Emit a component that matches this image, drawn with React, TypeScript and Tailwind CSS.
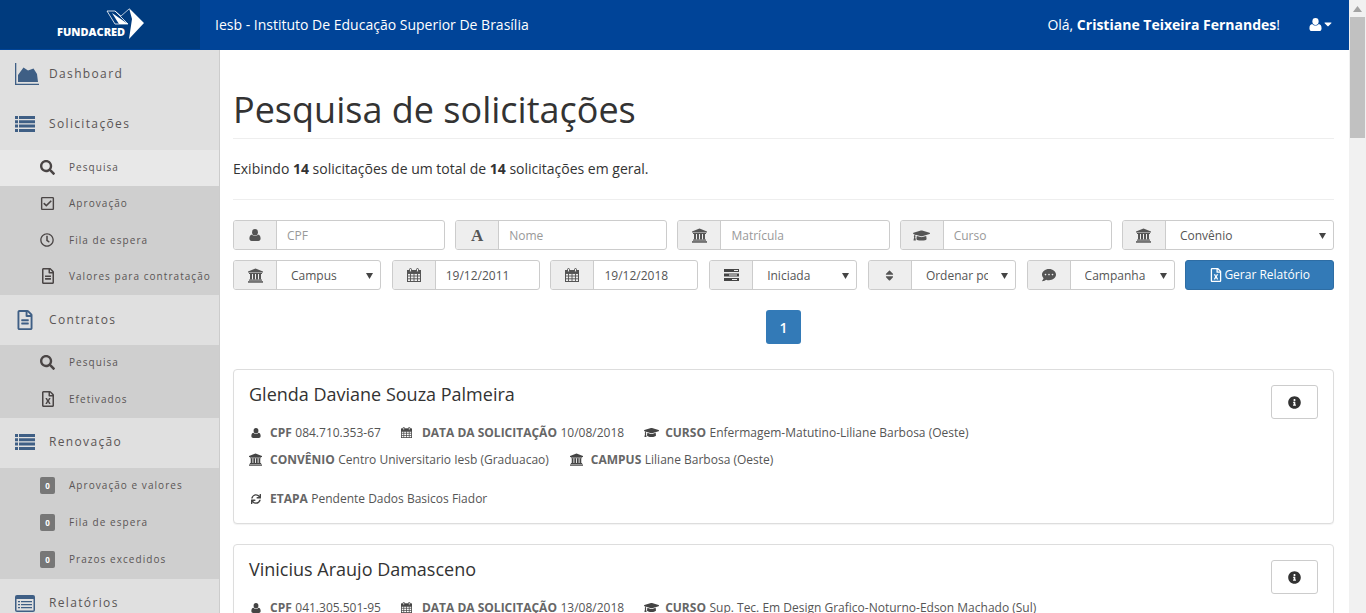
import React from "react";
import {
  FaGraduationCap, FaSort, FaCommentDots, FaRegFileExcel, FaInfoCircle, FaSync, FaSearch,
  FaRegCheckSquare, FaRegClock, FaRegFileAlt, FaCaretDown,
} from "react-icons/fa";

const font = "font-['Open_Sans',sans-serif]";

function UserIcon({ size = 12 }: { size?: number }) {
  return (
    <svg width={size} height={size} viewBox="0 0 12 12" fill="currentColor">
      <ellipse cx="6" cy="3.2" rx="2.9" ry="3.2" />
      <path d="M3 5.6C3.8 6.6 4.9 7 6 7s2.2-.4 3-1.4c1.7.3 2.6 1.6 2.6 4 0 1.5-.9 2.4-2.2 2.4H2.6C1.3 12 .4 11.100.4 9.600c0-2.400.9-3.700 2.600-4z" />
    </svg>
  );
}

function BankIcon({ size = 15 }: { size?: number }) {
  return (
    <svg width={size} height={size} viewBox="0 0 15 15" fill="currentColor">
      <path d="M7.500 0.500L15 3.500V4.500H0V3.500z" />
      <rect x="1" y="5" width="13" height="1" />
      <rect x="2" y="6" width="2" height="5.500" />
      <rect x="5" y="6" width="2" height="5.500" />
      <rect x="8" y="6" width="2" height="5.500" />
      <rect x="11" y="6" width="2" height="5.500" />
      <rect x="1" y="11.500" width="13" height="1.200" />
      <rect x="0" y="13.200" width="15" height="1.500" />
    </svg>
  );
}

function CalendarIcon({ size = 14 }: { size?: number }) {
  return (
    <svg width={size} height={size} viewBox="0 0 14 14" fill="none" stroke="currentColor" strokeWidth="1">
      <rect x="0.500" y="2.500" width="13" height="11" />
      <path d="M0.500 5.500h13M0.500 8h13M0.500 10.800h13M3.500 5.500v8M7 5.500v8M10.500 5.500v8" strokeWidth="0.900" />
      <path d="M0.500 2.500h13v2.500h-13z" fill="currentColor" />
      <rect x="2.500" y="0.500" width="2" height="3.500" rx="1" fill="#eee" />
      <rect x="9.500" y="0.500" width="2" height="3.500" rx="1" fill="#eee" />
    </svg>
  );
}

function ChartIcon() {
  return (
    <svg width="24" height="23" viewBox="0 0 24 23" fill="currentColor">
      <path d="M0 0h1.300v20.700H24V22H0z" />
      <path d="M3 19V12L8.500 4.500 13 7.500 18.500 5.500 22 11 23 19z" />
    </svg>
  );
}

function ListIcon() {
  return (
    <svg width="20" height="16" viewBox="0 0 20 16" fill="currentColor">
      <path d="M0 0h3v3H0zM4 0h16v3H4zM0 4.300h3v3H0zM4 4.300h16v3H4zM0 8.600h3v3H0zM4 8.600h16v3H4zM0 12.900h3v3H0zM4 12.900h16v3H4z" />
    </svg>
  );
}

function ListAltIcon() {
  return (
    <svg width="20" height="17" viewBox="0 0 20 17">
      <rect x="0" y="0" width="20" height="17" rx="2" fill="currentColor" />
      <rect x="1.500" y="4" width="17" height="11.500" fill="#e0e0e0" />
      <path d="M3 6h2v1.300H3zM6 6h11v1.300H6zM3 9h2v1.300H3zM6 9h11v1.300H6zM3 12h2v1.300H3zM6 12h11v1.300H6z" fill="currentColor" />
    </svg>
  );
}

function BarsIcon() {
  return (
    <svg width="15" height="14" viewBox="0 0 15 14">
      <path d="M0 1h15v3H0zM0 5.500h15v3H0zM0 10h15v3H0z" fill="#444" />
      <path d="M10 2h4v1h-4zM5 6.500h8v1H5zM8 11h5v1H8z" fill="#eee" />
    </svg>
  );
}

function Main({ icon, label }: { icon: React.ReactNode; label: string }) {
  return (
    <div className="flex h-[50px] items-center bg-[#e0e0e0] pb-[1.4px] pl-[15px]">
      <span className="flex w-[34px] items-center text-[#3f5f85]">{icon}</span>
      <span className="text-[12px] tracking-[1.35px] text-[#5a5555]">{label}</span>
    </div>
  );
}

function Sub({ icon, label, active, tall }: { icon: React.ReactNode; label: string; active?: boolean; tall?: boolean }) {
  return (
    <div className={`flex ${tall ? "h-[37px]" : "h-[36.33px]"} items-center pb-[1.4px] pl-[40px] ${active ? "bg-[#e8e8e8]" : ""}`}>
      <span className="flex w-[29px] items-center text-[#4a4545]">{icon}</span>
      <span className="whitespace-nowrap text-[10px] tracking-[1.05px] text-[#5a5555]">{label}</span>
    </div>
  );
}

function Zero() {
  return (
    <span className="flex h-[17px] w-[15px] items-center justify-center rounded-[2px] bg-[#777] text-[8px] font-bold text-white">0</span>
  );
}

function Addon({ children }: { children: React.ReactNode }) {
  return (
    <span className="flex w-[43px] shrink-0 items-center justify-center border-r border-[#ccc] bg-[#eee] text-[14px] text-[#555]">
      {children}
    </span>
  );
}

function Field({ icon, text, placeholder }: { icon: React.ReactNode; text: string; placeholder?: boolean }) {
  return (
    <div className="flex h-[30px] overflow-hidden rounded-[3px] border border-[#ccc] bg-white text-[12px]">
      <Addon>{icon}</Addon>
      <span className={`flex items-center pl-[10px] pt-[1px] ${placeholder ? "text-[#999]" : "text-[#555]"}`}>{text}</span>
    </div>
  );
}

function SelectField({ icon, text }: { icon: React.ReactNode; text: string }) {
  return (
    <div className="flex h-[30px] overflow-hidden rounded-[3px] border border-[#ccc] bg-white text-[12px] text-[#555]">
      <Addon>{icon}</Addon>
      <span className="flex min-w-0 flex-1 items-center pl-[14px] pr-[2px] pt-[1px]">
        <span className="mr-[8px] min-w-0 flex-1 overflow-hidden whitespace-nowrap">{text}</span>
        <svg className="mx-[5px] shrink-0" width="7" height="7" viewBox="0 0 7 7"><path d="M0 1h7L3.500 7z" fill="#444" /></svg>
      </span>
    </div>
  );
}

function Item({ icon, label, value }: { icon: React.ReactNode; label: string; value: string }) {
  return (
    <span className="flex items-center whitespace-nowrap">
      <span className="flex w-[21px] items-center text-[12px] text-[#444]">{icon}</span>
      <b className="font-bold text-[#666]">{label}</b>
      <span className="ml-[3.5px] text-[#555]">{value}</span>
    </span>
  );
}

function Card({ name, cpf, date, curso, convenio, campus, etapa }: { name: string; cpf: string; date: string; curso: string; convenio: string; campus: string; etapa: string }) {
  return (
    <div className="relative mb-[20px] h-[155px] shrink-0 rounded-[4px] border border-[#ddd] bg-white px-[15px] pt-[12px] shadow-[0_1px_1px_rgba(0,0,0,0.05)]">
      <div className="text-[18px] leading-[25px] text-[#333]">{name}</div>
      <button className="absolute right-[15px] top-[15px] flex h-[34px] w-[47px] items-center justify-center rounded-[3px] border border-[#ccc] bg-white text-[13px] text-[#333]">
        <FaInfoCircle />
      </button>
      <div className="mt-[12px] flex h-[27px] items-center gap-[20px] text-[12px]">
        <Item icon={<span className="pl-[2px]"><UserIcon size={10} /></span>} label="CPF" value={cpf} />
        <Item icon={<CalendarIcon size={11} />} label="DATA DA SOLICITAÇÃO" value={date} />
        <Item icon={<FaGraduationCap size={15} />} label="CURSO" value={curso} />
      </div>
      <div className="flex h-[27px] items-center gap-[21px] text-[12px]">
        <Item icon={<BankIcon size={13} />} label="CONVÊNIO" value={convenio} />
        <Item icon={<BankIcon size={13} />} label="CAMPUS" value={campus} />
      </div>
      <div className="mt-[12px] flex h-[27px] items-center text-[12px]">
        <Item icon={<span className="pl-[2px]"><FaSync size={10} /></span>} label="ETAPA" value={etapa} />
      </div>
    </div>
  );
}

function Logo() {
  return (
    <div className="flex h-[50px] w-[200px] shrink-0 items-center bg-[#003b7e] pl-[50px]">
      <div className="relative h-[40px] w-[100px]">
        <svg width="100" height="40" viewBox="0 0 100 40">
          <path d="M79 4 94 19 79 35 82 15z" fill="#fff" />
          <path d="M57 7h8l13 13H65z" fill="none" stroke="#fff" strokeWidth="0.800" />
          <path d="M62 9l16 11h-9z" fill="#fff" />
          <path d="M65 7l6 5 8-7" fill="none" stroke="#fff" strokeWidth="0.700" />
        </svg>
        <span className="absolute left-[7px] top-[21px] text-[11px] font-extrabold leading-[14px] text-white">FUNDACRED</span>
      </div>
    </div>
  );
}

export default function App() {
  return (
    <div className={`${font} flex h-[613px] w-[1366px] overflow-hidden bg-white`}>
      <div className="flex w-[1349px] shrink-0 flex-col">
        <header className="flex h-[50px] shrink-0 items-center bg-[#004498] pb-[2px] text-white">
          <Logo />
          <div className="ml-[15px] flex-1 text-[14px]">Iesb - Instituto De Educação Superior De Brasília</div>
          <div className="text-[14px]">Olá, <b className="font-bold">Cristiane Teixeira Fernandes</b>!</div>
          <div className="ml-[29px] mr-[15px] flex items-center text-[13px]">
            <UserIcon size={13} /><FaCaretDown size={12} />
          </div>
        </header>
        <div className="flex min-h-0 flex-1">
          <aside className="w-[220px] shrink-0 overflow-hidden border-r border-[#ccc] bg-[#cfcfcf]">
            <Main icon={<ChartIcon />} label="Dashboard" />
            <Main icon={<ListIcon />} label="Solicitações" />
            <Sub active icon={<FaSearch size={15} />} label="Pesquisa" />
            <Sub icon={<FaRegCheckSquare size={15} />} label="Aprovação" />
            <Sub icon={<FaRegClock size={14} />} label="Fila de espera" />
            <Sub icon={<FaRegFileAlt size={16} />} label="Valores para contratação" />
            <Main icon={<FaRegFileAlt size={20} />} label="Contratos" />
            <Sub icon={<FaSearch size={15} />} label="Pesquisa" />
            <Sub icon={<FaRegFileExcel size={16} />} label="Efetivados" />
            <Main icon={<ListIcon />} label="Renovação" />
            <Sub tall icon={<Zero />} label="Aprovação e valores" />
            <Sub tall icon={<Zero />} label="Fila de espera" />
            <Sub tall icon={<Zero />} label="Prazos excedidos" />
            <Main icon={<ListAltIcon />} label="Relatórios" />
          </aside>
          <main className="min-w-0 flex-1 overflow-hidden pl-[13px] pr-[15px]">
            <h1 className="mt-[36px] h-[53px] border-b border-[#eee] text-[36px] font-normal leading-[48px] text-[#333]">Pesquisa de solicitações</h1>
            <p className="mt-[20px] text-[14px] leading-[20px] text-[#333]">
              Exibindo <b className="font-bold">14</b> solicitações de um total de <b className="font-bold">14</b> solicitações em geral.
            </p>
            <div className="mt-[20px] border-t border-[#eee]" />
            <div className="mt-[20px] grid grid-cols-5 gap-x-[10.2px]">
              <Field icon={<UserIcon size={12} />} text="CPF" placeholder />
              <Field icon={<span className="font-['Liberation_Serif',serif] text-[17px] font-bold leading-none">A</span>} text="Nome" placeholder />
              <Field icon={<BankIcon />} text="Matrícula" placeholder />
              <Field icon={<FaGraduationCap size={17} />} text="Curso" placeholder />
              <SelectField icon={<BankIcon />} text="Convênio" />
            </div>
            <div className="mt-[10px] grid grid-cols-7 gap-x-[10.04px] [&>div]:w-[148px]">
              <SelectField icon={<BankIcon />} text="Campus" />
              <Field icon={<CalendarIcon />} text="19/12/2011" />
              <Field icon={<CalendarIcon />} text="19/12/2018" />
              <SelectField icon={<BarsIcon />} text="Iniciada" />
              <SelectField icon={<FaSort size={13} />} text="Ordenar por" />
              <SelectField icon={<FaCommentDots size={14} />} text="Campanha" />
              <button className="flex h-[30px] items-center justify-center gap-[1px] rounded-[3px] border border-[#2e6da4] bg-[#337ab7] text-[12px] text-white">
                <FaRegFileExcel size={14} /> Gerar Relatório
              </button>
            </div>
            <div className="mt-[20px] flex justify-center">
              <span className="flex h-[34px] w-[35px] items-center justify-center rounded-[3px] bg-[#337ab7] text-[14px] font-semibold text-white">1</span>
            </div>
            <div className="mt-[25px] flex flex-col">
              <Card name="Glenda Daviane Souza Palmeira" cpf="084.710.353-67" date="10/08/2018" curso="Enfermagem-Matutino-Liliane Barbosa (Oeste)" convenio="Centro Universitario Iesb (Graduacao)" campus="Liliane Barbosa (Oeste)" etapa="Pendente Dados Basicos Fiador" />
              <Card name="Vinicius Araujo Damasceno" cpf="041.305.501-95" date="13/08/2018" curso="Sup. Tec. Em Design Grafico-Noturno-Edson Machado (Sul)" convenio="Centro Universitario Iesb (Graduacao)" campus="Edson Machado (Sul)" etapa="Pendente Dados Basicos Fiador" />
            </div>
          </main>
        </div>
      </div>
      <div className="flex w-[17px] shrink-0 flex-col items-center bg-[#f1f1f1]">
        <svg className="mb-[5px] mt-[6px]" width="9" height="6" viewBox="0 0 9 6"><path d="M4.500 0L9 6H0z" fill="#a3a3a3" /></svg>
        <div className="h-[121px] w-[15px] bg-[#c1c1c1]" />
      </div>
    </div>
  );
}
